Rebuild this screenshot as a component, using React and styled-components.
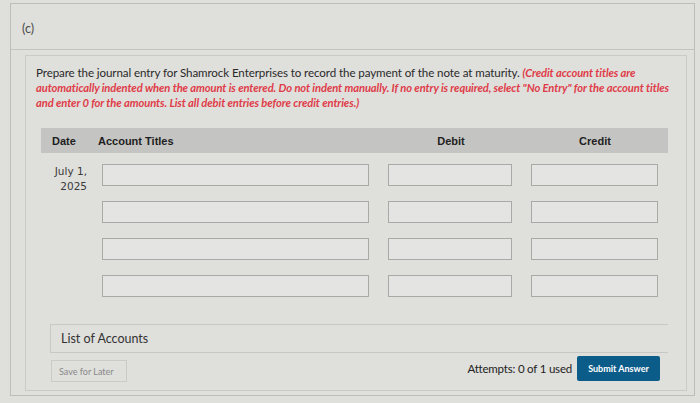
import styled, { createGlobalStyle } from 'styled-components';

const GlobalStyle = createGlobalStyle`
  html, body {
    margin: 0;
    padding: 0;
    background: #dfdfdc;
  }
  body {
    font-family: Lato, "Open Sans", sans-serif;
    color: #2b2b2b;
  }
`;

const Frame = styled.div`
  margin: 3px 5px 6px 10px;
  border: 1px solid #bdbdbb;
  height: 393px;
  box-sizing: border-box;
  display: flex;
  flex-direction: column;
`;

const PartHeader = styled.div`
  flex-shrink: 0;
  height: 46px;
  box-sizing: border-box;
  padding: 17px 0 0 11px;
  border-bottom: 1px solid #c3c3c1;
  font-size: 12.5px;
  color: #4a4a4a;
`;

const Panel = styled.div`
  margin: 5px 7px 4px 14px;
  flex: 1;
  min-height: 0;
  border: 1px solid #cacac8;
  padding: 9px 18px 0 10px;
  display: flex;
  flex-direction: column;
`;

const Prompt = styled.p`
  margin: 0;
  font-size: 11.6px;
  line-height: 15px;
  letter-spacing: -0.1px;
  color: #2a2a2a;
  white-space: nowrap;
`;

const Note = styled.em`
  color: #e03c48;
  font-weight: 700;
  font-style: italic;
  font-size: 11.2px;
  letter-spacing: -0.1px;
`;

const Table = styled.div`
  margin: 18px 0 0 5px;
  display: flex;
  flex-direction: column;
  gap: 15px;
`;

const Row = styled.div`
  display: grid;
  grid-template-columns: 57px 283px 140px 148px;
  align-items: start;
  height: 22px;
`;

const HeaderRow = styled(Row)`
  height: 25px;
  align-items: center;
  background: #c4c4c2;
  margin-bottom: -4px;
  font-family: "Liberation Sans", Arial, sans-serif;
  font-weight: 700;
  font-size: 11px;
  color: #1e1e1e;
`;

const HeadCell = styled.div`
  padding-left: ${p => p.$pad || 0}px;
  text-align: ${p => p.$center ? 'center' : 'left'};
`;

const DateCell = styled.div`
  padding: 0 11px 0 0;
  text-align: right;
  font-family: "DejaVu Sans", Verdana, sans-serif;
  font-size: 10.5px;
  line-height: 15px;
  color: #3a3a3a;
`;

const Field = styled.div`
  height: 22px;
  box-sizing: border-box;
  margin-left: ${p => p.$ml}px;
  width: ${p => p.$w}px;
  border: 1px solid #a9a9a7;
  background: #e4e4e2;
`;

const ListBox = styled.div`
  margin: 27px 0 0 14px;
  height: 29px;
  flex-shrink: 0;
  box-sizing: border-box;
  border: 1px solid #c8c8c6;
  border-right: 0;
  display: flex;
  align-items: center;
  padding-left: 10px;
  font-size: 12.5px;
  color: #333;
`;

const Footer = styled.div`
  margin: 1px 0 0 15px;
  display: flex;
  align-items: center;
  justify-content: space-between;
  padding-right: 8px;
`;

const SaveButton = styled.button`
  height: 22px;
  width: 76px;
  border: 1px solid #cacac8;
  background: transparent;
  font-family: Lato, sans-serif;
  font-size: 9px;
  color: #8a8a8a;
  text-align: left;
  padding-left: 7px;
  margin-top: 6px;
`;

const SubmitArea = styled.div`
  display: flex;
  align-items: center;
  gap: 5px;
`;

const Attempts = styled.span`
  font-size: 11.5px;
  color: #222;
  letter-spacing: -0.2px;
`;

const SubmitButton = styled.button`
  height: 25px;
  width: 83px;
  border: 0;
  border-radius: 2px;
  background: #0c5c8a;
  color: #fff;
  font-family: Lato, sans-serif;
  font-weight: 700;
  font-size: 9px;
`;

const rows = [0, 1, 2, 3];

export default function App() {
  return (
    <>
      <GlobalStyle />
      <Frame>
        <PartHeader>(c)</PartHeader>
        <Panel>
          <Prompt>
            Prepare the journal entry for Shamrock Enterprises to record the payment of the note at maturity.{' '}
            <Note>
              (Credit account titles are
              <br />
              automatically indented when the amount is entered. Do not indent manually. If no entry is required, select "No Entry" for the account titles
              <br />
              and enter 0 for the amounts. List all debit entries before credit entries.)
            </Note>
          </Prompt>
          <Table>
            <HeaderRow>
              <HeadCell $pad={11}>Date</HeadCell>
              <HeadCell>Account Titles</HeadCell>
              <HeadCell $center>Debit</HeadCell>
              <HeadCell $center>Credit</HeadCell>
            </HeaderRow>
            {rows.map(i => (
              <Row key={i}>
                <DateCell>
                  {i === 0 && (
                    <>
                      July 1,
                      <br />
                      2025
                    </>
                  )}
                </DateCell>
                <Field $ml={4} $w={267} />
                <Field $ml={7} $w={124} />
                <Field $ml={10} $w={127} />
              </Row>
            ))}
          </Table>
          <ListBox>List of Accounts</ListBox>
          <Footer>
            <SaveButton>Save for Later</SaveButton>
            <SubmitArea>
              <Attempts>Attempts: 0 of 1 used</Attempts>
              <SubmitButton>Submit Answer</SubmitButton>
            </SubmitArea>
          </Footer>
        </Panel>
      </Frame>
    </>
  );
}
